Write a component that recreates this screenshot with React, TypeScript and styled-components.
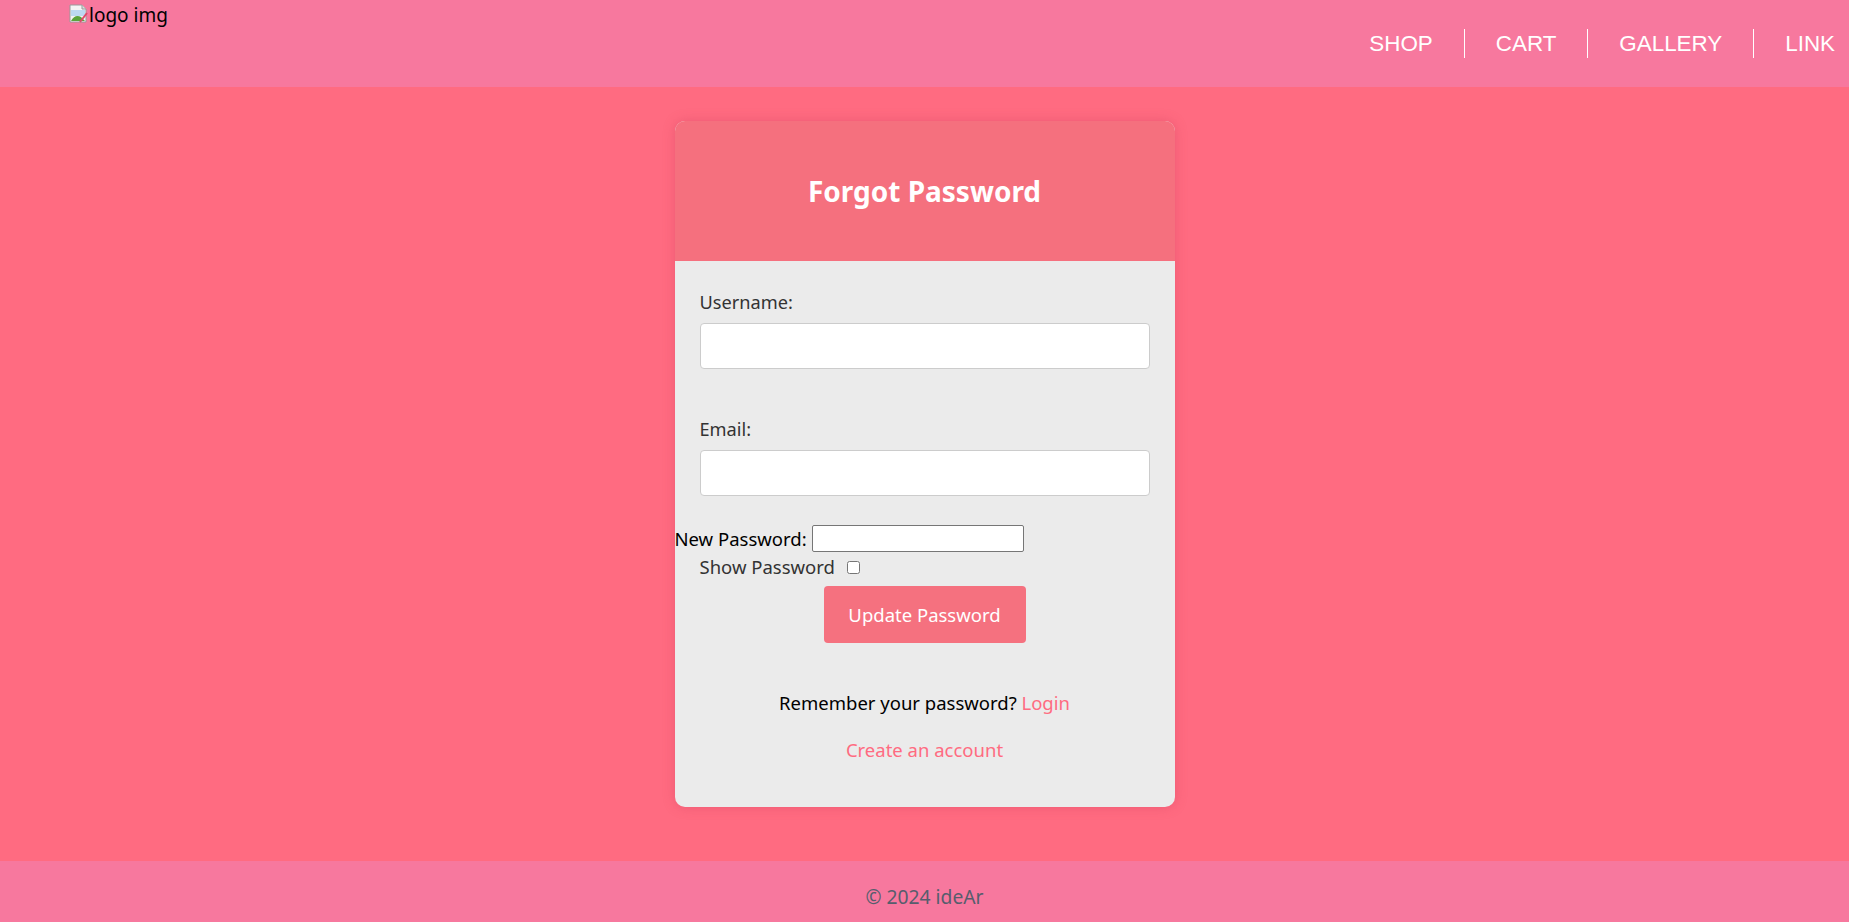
import React, { useState } from "react";
import styled, { createGlobalStyle } from "styled-components";

const GlobalStyle = createGlobalStyle`
  html, body { margin: 0; padding: 0; }
  body {
    font-family: "Segoe UI", "Noto Sans", "Open Sans", sans-serif;
    background: #ff6b81;
  }
  * { box-sizing: border-box; }
`;

const Page = styled.div`
  display: flex;
  flex-direction: column;
  min-height: 100vh;
`;

const Header = styled.header`
  height: 87px;
  background: #f7789e;
  display: flex;
  justify-content: space-between;
  align-items: flex-start;
  padding: 0 14px 0 69px;
`;

const Logo = styled.div`
  display: flex;
  align-items: flex-start;
  padding-top: 4px;
  font-family: "Segoe UI", "Noto Sans", sans-serif;
  font-size: 19px;
  line-height: 22px;
  color: #000;
`;

const Nav = styled.nav`
  display: flex;
  align-items: center;
  height: 100%;
  padding-bottom: 1px;
`;

const NavLink = styled.a<{ $last?: boolean }>`
  font-family: "Liberation Sans", Arial, sans-serif;
  font-size: 22.4px;
  color: #fff;
  text-decoration: none;
  padding: ${(p) => (p.$last ? "0 0 0 31px" : "0 31px")};
  line-height: 29px;
  border-right: ${(p) => (p.$last ? "none" : "1px solid #fff")};
`;

const Main = styled.main`
  flex: 1;
  background: #ff6b81;
  display: flex;
  justify-content: center;
  align-items: flex-start;
  padding: 34px 0 54px;
`;

const Card = styled.div`
  width: 500px;
  background: #ebebeb;
  border-radius: 10px;
  overflow: hidden;
  box-shadow: 0 0 12px rgba(200, 60, 90, 0.35);
`;

const CardHeader = styled.div`
  height: 140px;
  background: #f5707e;
  display: flex;
  align-items: center;
  justify-content: center;
`;

const Title = styled.h2`
  margin: 0;
  color: #fff;
  font-size: 28px;
  font-weight: 700;
`;

const CardBody = styled.form`
  padding: 29px 0 45px;
  display: flex;
  flex-direction: column;
`;

const Field = styled.div`
  padding: 0 25px;
  margin-bottom: 48px;
`;

const Label = styled.label`
  display: block;
  font-size: 18.2px;
  line-height: 24px;
  color: #333;
  margin-bottom: 9px;
`;

const TextInput = styled.input`
  display: block;
  width: 100%;
  height: 46px;
  border: 1px solid #ccc;
  border-radius: 4px;
  background: #fff;
  font-size: 16px;
  padding: 0 10px;
`;

const InlineRow = styled.div`
  display: flex;
  align-items: center;
  margin-top: -19px;
  height: 27px;
  font-size: 18.5px;
  color: #000;
`;

const PlainInput = styled.input`
  width: 212px;
  height: 27px;
  margin-left: 5px;
  border: 1px solid #767676;
  border-radius: 2px;
  background: #fff;
`;

const ShowRow = styled.label`
  display: flex;
  align-items: center;
  padding: 0 25px;
  margin-top: 3px;
  font-size: 18.5px;
  line-height: 24px;
  color: #333;
`;

const Check = styled.input`
  margin: 0 0 0 12px;
  width: 13px;
  height: 13px;
`;

const Button = styled.button`
  align-self: center;
  margin-top: 7px;
  width: 202px;
  height: 57px;
  border: none;
  border-radius: 4px;
  background: #f5717f;
  color: #fff;
  font-family: inherit;
  font-size: 18.5px;
`;

const Footnote = styled.p<{ $first?: boolean }>`
  margin: ${(p) => (p.$first ? "48px" : "23px")} 0 0;
  text-align: center;
  font-size: 18.5px;
  line-height: 24px;
  color: #000;
`;

const Link = styled.a`
  color: #ff6b81;
  text-decoration: none;
`;

const Footer = styled.footer`
  height: 61px;
  background: #f7789e;
  display: flex;
  align-items: center;
  justify-content: center;
  padding-top: 10px;
  color: #565d6d;
  font-size: 19.3px;
`;

const BrokenImage = () => (
  <svg width="20" height="20" viewBox="0 0 20 20">
    <path d="M1 1h12l4 4v13H1z" fill="#f4f4f4" stroke="#9a9a9a" />
    <path d="M13 1v4h4" fill="#ddd" stroke="#9a9a9a" />
    <rect x="2" y="6" width="14" height="6" fill="#bcd9f2" />
    <path d="M2 17 Q6 10 12 13 L16 17z" fill="#5aa43c" />
    <path d="M11 18 L18 9" stroke="#e0486a" strokeWidth="2" />
  </svg>
);

export default function App() {
  const [show, setShow] = useState(false);
  return (
    <Page>
      <GlobalStyle />
      <Header>
        <Logo>
          <BrokenImage />
          <span>logo img</span>
        </Logo>
        <Nav>
          <NavLink href="#">SHOP</NavLink>
          <NavLink href="#">CART</NavLink>
          <NavLink href="#">GALLERY</NavLink>
          <NavLink href="#" $last>
            LINK
          </NavLink>
        </Nav>
      </Header>
      <Main>
        <Card>
          <CardHeader>
            <Title>Forgot Password</Title>
          </CardHeader>
          <CardBody onSubmit={(e) => e.preventDefault()}>
            <Field>
              <Label htmlFor="username">Username:</Label>
              <TextInput id="username" type="text" />
            </Field>
            <Field>
              <Label htmlFor="email">Email:</Label>
              <TextInput id="email" type="email" />
            </Field>
            <InlineRow>
              <span>New Password:</span>
              <PlainInput type={show ? "text" : "password"} />
            </InlineRow>
            <ShowRow>
              Show Password
              <Check type="checkbox" checked={show} onChange={() => setShow(!show)} />
            </ShowRow>
            <Button type="submit">Update Password</Button>
            <Footnote $first>
              Remember your password? <Link href="#">Login</Link>
            </Footnote>
            <Footnote>
              <Link href="#">Create an account</Link>
            </Footnote>
          </CardBody>
        </Card>
      </Main>
      <Footer>© 2024 ideAr</Footer>
    </Page>
  );
}
